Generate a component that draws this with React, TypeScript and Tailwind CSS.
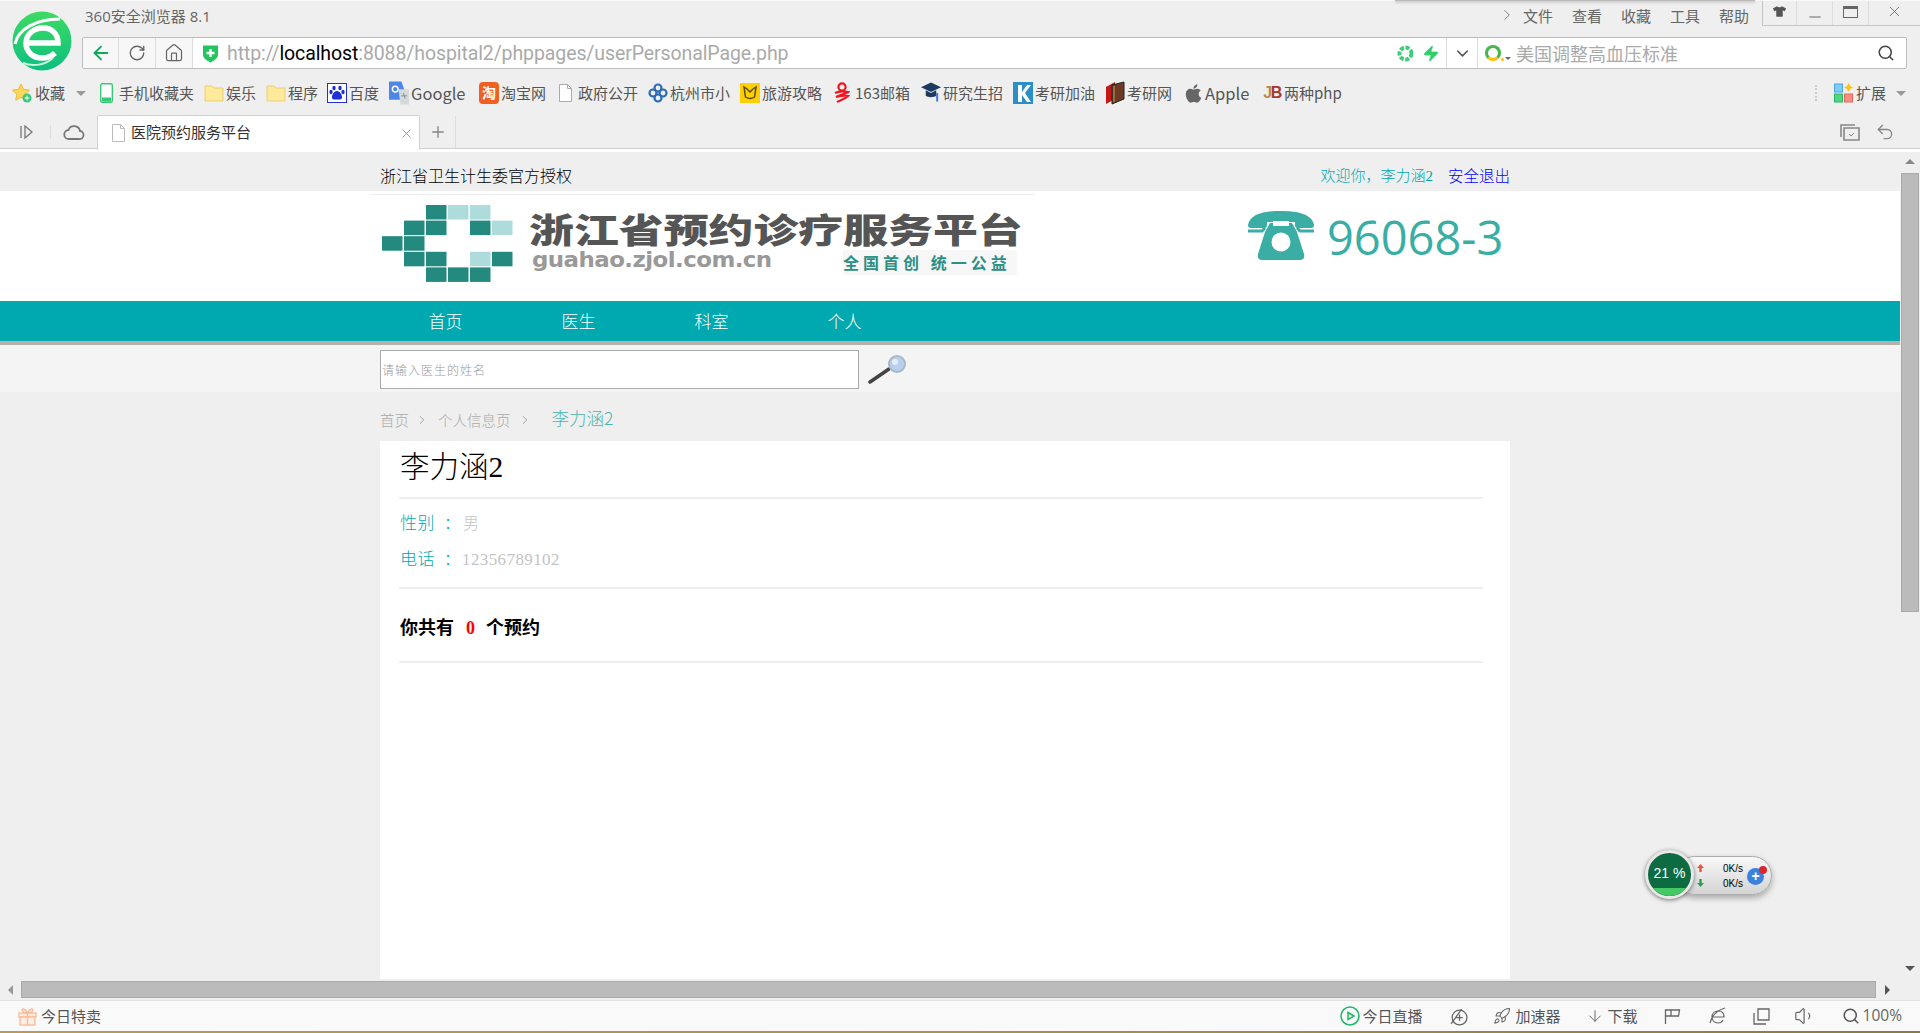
import React from "react";
import { ArrowLeft, RotateCw, Home, ChevronDown, ChevronRight, Search, X, Plus, Minus, Zap, Undo2, ArrowDown, Rocket, Volume1 } from "lucide-react";
import { FaApple, FaTshirt } from "react-icons/fa";

const Caret = () => <span className="w-0 h-0 border-x-[5px] border-x-transparent border-t-[5px] border-t-[#999]" />;

const Folder = () => (
  <svg width="20" height="20" viewBox="0 0 20 20"><path d="M1 3h7l2 2h9v13H1z" fill="#ffe99a" stroke="#e8cf78" /></svg>
);
const Doc = ({ c = "#aaa" }: { c?: string }) => (
  <svg width="15" height="18" viewBox="0 0 15 18" fill="#fff" stroke={c}><path d="M1.500.5h8l4 4v13h-12z" /><path d="M9.500.5v4h4" fill="none" /></svg>
);
const Star = () => (
  <svg width="20" height="20" viewBox="0 0 20 20"><path d="M9 1l2.600 5.400 5.900.8-4.300 4.100 1 5.900L9 14.400l-5.200 2.800 1-5.900L.5 7.200l5.900-.8z" fill="#ffd75a" stroke="#e9b93c" /><circle cx="15" cy="15" r="4.500" fill="#36c878" /><path d="M15 12.500v5M12.500 15h5" stroke="#fff" /></svg>
);
const Phone = () => (
  <svg width="13" height="20" viewBox="0 0 13 20"><rect x=".7" y=".7" width="11.600" height="18.600" rx="1.500" fill="#fff" stroke="#39c77a" strokeWidth="1.400" /><rect x="2" y="14.500" width="9" height="4" fill="#39c77a" /></svg>
);
const Baidu = () => (
  <svg width="20" height="20" viewBox="0 0 20 20"><rect x=".5" y=".5" width="19" height="19" fill="#fff" stroke="#2030d8" /><g fill="#2030d8"><ellipse cx="7" cy="5" rx="1.700" ry="2.300" /><ellipse cx="13" cy="5" rx="1.700" ry="2.300" /><ellipse cx="4" cy="9" rx="1.700" ry="2.200" /><ellipse cx="16" cy="9" rx="1.700" ry="2.200" /><path d="M10 8c3 0 5.500 4.500 5 7-.5 2-3 1.500-5 1.500S5.500 17 5 15c-.5-2.500 2-7 5-7z" /></g></svg>
);
const Gg = () => (
  <svg width="21" height="24" viewBox="0 0 21 24"><path d="M0 0h13l3 8v11H0z" fill="#4d86e8" /><path d="M10 8h11v16H12z" fill="#d6d8da" /><circle cx="6.500" cy="8" r="3" fill="none" stroke="#fff" strokeWidth="1.500" /><path d="M15 12l2 6M13 15h6" stroke="#7a8ea8" /></svg>
);
const Taobao = () => (
  <span className="w-[20px] h-[22px] rounded-[4px] bg-[#f06020] text-white text-[14px] leading-[21px] text-center font-bold">淘</span>
);
const Hz = () => (
  <svg width="20" height="20" viewBox="0 0 20 20" fill="none" stroke="#2d6cb5" strokeWidth="2.200"><circle cx="10" cy="5" r="3.500" /><circle cx="10" cy="15" r="3.500" /><circle cx="5" cy="10" r="3.500" /><circle cx="15" cy="10" r="3.500" /></svg>
);
const Lv = () => (
  <svg width="20" height="20" viewBox="0 0 20 20"><rect width="20" height="20" fill="#ffcf00" /><path d="M4 4l1.500 10c3 2 6 2 9 0L16 4l-3 2-3 3-3-3z" fill="none" stroke="#5a4a10" strokeWidth="1.500" /></svg>
);
const M163 = () => (
  <svg width="17" height="22" viewBox="0 0 17 22" fill="none" stroke="#ef1620" strokeWidth="2.200"><circle cx="9" cy="5" r="3.600" /><path d="M2 11c4-2 9-2 13-1-3 2-8 3-12 5 4-1 8-2 12-1-3 3-7 4-11 6" /></svg>
);
const Cap = () => (
  <svg width="21" height="24" viewBox="0 0 21 24"><path d="M0 6L10.500 1 21 6l-10.500 5z" fill="#1d3a5f" /><path d="M5 9v6c3 2 8 2 11 0V9l-5.500 3z" fill="#1d3a5f" /><path d="M17 12v9" stroke="#3a72e0" strokeWidth="2" /></svg>
);
const K = () => (
  <svg width="20" height="22" viewBox="0 0 20 22"><rect width="20" height="22" fill="#2a8ec7" /><path d="M5 3h4v7l5-7h4l-6 8 6 9h-4l-5-7v7H5z" fill="#fff" /></svg>
);
const Book = () => (
  <svg width="20" height="24" viewBox="0 0 20 24"><path d="M1 6l9-5v17l-9 5z" fill="#c21818" /><path d="M7 4l12-3v17L7 23z" fill="#6a3a25" stroke="#222" /><path d="M9 5v16" stroke="#c9a060" /></svg>
);
const JB = () => (
  <span className="w-[20px] h-[22px] flex items-center justify-center text-[16px] font-black font-['Liberation_Sans',sans-serif] tracking-[-1.500px]"><span className="text-[#b58a56]">J</span><span className="text-[#a63a30]">B</span></span>
);

const bookmarks: { icon: React.ReactNode; label: string; w: number; iw?: number; big?: boolean }[] = [
  { icon: <Phone />, label: "手机收藏夹", w: 104, iw: 17 },
  { icon: <Folder />, label: "娱乐", w: 62 },
  { icon: <Folder />, label: "程序", w: 61 },
  { icon: <Baidu />, label: "百度", w: 62 },
  { icon: <Gg />, label: "Google", w: 90, big: true },
  { icon: <Taobao />, label: "淘宝网", w: 79 },
  { icon: <Doc />, label: "政府公开", w: 90, iw: 18 },
  { icon: <Hz />, label: "杭州市小", w: 92 },
  { icon: <Lv />, label: "旅游攻略", w: 93 },
  { icon: <M163 />, label: "163邮箱", w: 88 },
  { icon: <Cap />, label: "研究生招", w: 92 },
  { icon: <K />, label: "考研加油", w: 92 },
  { icon: <Book />, label: "考研网", w: 79 },
  { icon: <FaApple className="text-[#666] text-[21px]" />, label: "Apple", w: 78, iw: 19, big: true },
  { icon: <JB />, label: "两种php", w: 84 },
];

const Logo = () => (
  <svg width="60" height="60" viewBox="0 0 60 60">
    <defs>
      <linearGradient id="lg" x1="0" y1="0" x2="0" y2="1"><stop offset="0" stopColor="#3edb63" /><stop offset="1" stopColor="#0bbf80" /></linearGradient>
    </defs>
    <circle cx="30" cy="30" r="29.500" fill="url(#lg)" />
    <path d="M14 32h32c0-10-7-15-15-15-10 0-17 7-17 15 0 9 7 15 16 15 6 0 10-2 13-5" fill="none" stroke="#fff" strokeWidth="5.500" />
    <path d="M3 33C6 18 24 8 48 8" fill="none" stroke="#fff" strokeWidth="3" />
    <path d="M11 52c10 4 22 2 30-5" fill="none" stroke="#c8f5d8" strokeWidth="2" />
  </svg>
);

const mosaic = [
  [2, 0, "d"], [3, 0, "l"], [4, 0, "l"],
  [1, 1, "d"], [2, 1, "d"], [4, 1, "d"], [5, 1, "l"],
  [0, 2, "d"], [1, 2, "d"],
  [1, 3, "d"], [2, 3, "d"], [4, 3, "l"], [5, 3, "d"],
  [2, 4, "d"], [3, 4, "d"], [4, 4, "d"],
] as [number, number, string][];

const Mosaic = () => (
  <svg width="131" height="77" viewBox="0 0 131 77" className="shrink-0">
    {mosaic.map(([c, r, t], i) => (
      <rect key={i} x={c * 22} y={r * 15.600} width="20.500" height="14.500" fill={t === "d" ? "#24897e" : "#aedbdc"} />
    ))}
  </svg>
);

const Tel = () => (
  <svg width="66" height="50" viewBox="0 0 66 50" className="shrink-0">
    <path d="M0 14C2 3 16 0 33 0s31 3 33 14c0 2-1 3-3 3H49c-1 0-2-1-2-3v-3H19v3c0 2-1 3-2 3H3c-2 0-3-1-3-3z" fill="#3aaea5" />
    <path d="M0 20h14l3-3M66 20H52l-3-3" fill="none" stroke="#3aaea5" strokeWidth="3" />
    <path d="M22 12h22l5 9 7 22c1 4-1 6-4 6H14c-3 0-5-2-4-6l7-22z" fill="#3aaea5" />
    <rect x="25" y="10" width="16" height="5" fill="#fff" />
    <circle cx="33" cy="31" r="9.500" fill="#fff" />
  </svg>
);

const Magnifier = () => (
  <svg width="40" height="30" viewBox="0 0 40 30" className="shrink-0">
    <path d="M2 27L21 14" stroke="#444" strokeWidth="3.500" strokeLinecap="round" />
    <circle cx="29" cy="9" r="8" fill="#b8d0f0" stroke="#a8b8c8" strokeWidth="2" />
    <circle cx="27" cy="7" r="3" fill="#e4eefa" />
  </svg>
);

const Widget = () => (
  <div className="absolute left-[1645px] top-[850px] w-[127px] h-[49px] font-['Liberation_Sans',sans-serif]">
    <div className="absolute left-[30px] top-[6px] w-[97px] h-[39px] rounded-full bg-gradient-to-b from-[#f8f8f8] to-[#d4d4d4] border border-[#aaa] shadow-[0_3px_6px_rgba(0,0,0,0.3)]">
      <svg width="7" height="8" viewBox="0 0 7 8" className="absolute left-[21px] top-[7px]"><path d="M3.500 0L7 4H4.700v4H2.300V4H0z" fill="#e8553c" /></svg>
      <svg width="7" height="8" viewBox="0 0 7 8" className="absolute left-[21px] top-[22px]"><path d="M3.500 8L7 4H4.700V0H2.300v4H0z" fill="#2f9a55" /></svg>
      <span className="absolute left-[47px] top-[6px] text-[10px] leading-[12px] text-black">0K/s</span>
      <span className="absolute left-[47px] top-[21px] text-[10px] leading-[12px] text-black">0K/s</span>
      <span className="absolute left-[71px] top-[11px] w-[17px] h-[17px] rounded-full bg-[#3b82dc] text-white text-[14px] leading-[16px] text-center font-bold">+</span>
      <span className="absolute left-[83px] top-[9px] w-[8px] h-[8px] rounded-full bg-[#d9272e]" />
    </div>
    <div className="absolute left-0 top-0 w-[49px] h-[49px] rounded-full border-[3px] border-[#e8e8e8] shadow-[0_1px_4px_rgba(0,0,0,0.5)] overflow-hidden bg-[#0d6b42] flex flex-col">
      <div className="flex-1 pt-[5px] flex items-center justify-center text-white text-[14px]">21 %</div>
      <div className="h-[8px] bg-[#45c964]" />
    </div>
  </div>
);

const Sep = () => <span className="block w-px h-[32px] bg-[#dcdcdc]" />;

export default function App() {
  return (
    <div className="relative w-[1920px] h-[1033px] overflow-hidden bg-[#efefef] flex flex-col font-['Noto_Sans_CJK_SC',sans-serif] text-[#555]">
      {/* top rows */}
      <div className="flex border-t border-t-[#fafafa] h-[69px]">
        <div className="w-[82px] shrink-0 pl-[12px] pt-[10px]"><Logo /></div>
        <div className="flex-1 flex flex-col">
          <div className="h-[36px] flex items-start">
            <span className="ml-[3px] mt-[5px] text-[15px] leading-[20px] text-[#666] font-['Open_Sans','Noto_Sans_CJK_SC',sans-serif]">360安全浏览器 8.1</span>
            <div className="ml-auto flex items-start">
              <ChevronRight className="w-[18px] h-[18px] mt-[5px] mr-[7px] text-[#777]" strokeWidth={1.200} />
              <div className="flex gap-[19px] mt-[5px] mr-[13px] text-[15px] leading-[20px] text-[#666]">
                <span>文件</span><span>查看</span><span>收藏</span><span>工具</span><span>帮助</span>
              </div>
              <div className="flex h-[25px] border-l border-b border-[#c4c4c4] text-[#666]">
                <div className="w-[34px] flex justify-center items-center border-r border-[#ddd]"><FaTshirt className="text-[#555] text-[13px] -mt-[3px]" /></div>
                <div className="w-[36px] flex justify-center items-center border-r border-[#ddd]"><Minus className="w-[18px] h-[18px] mt-[7px]" strokeWidth={1.300} /></div>
                <div className="w-[36px] flex justify-center items-center border-r border-[#ddd]"><span className="w-[15px] h-[12px] border border-t-[3px] border-[#666] -mt-[3px]" /></div>
                <div className="w-[51px] flex justify-center items-center"><X className="w-[17px] h-[17px] -mt-[4px]" strokeWidth={1.200} /></div>
              </div>
            </div>
          </div>
          <div className="h-[32px] mr-[13px] flex items-stretch bg-white border border-[#bdbdbd] rounded-[2px]">
            <div className="w-[36px] flex items-center justify-center bg-[#f7f7f7] border-r border-[#ddd]"><ArrowLeft className="w-[22px] h-[22px] text-[#0da858]" strokeWidth={2} /></div>
            <div className="w-[37px] flex items-center justify-center bg-[#f7f7f7] border-r border-[#ddd]"><RotateCw className="w-[18px] h-[18px] text-[#666]" strokeWidth={1.800} /></div>
            <div className="w-[37px] flex items-center justify-center bg-[#f7f7f7] border-r border-[#ddd]"><Home className="w-[20px] h-[20px] text-[#666]" strokeWidth={1.500} /></div>
            <div className="w-[34px] flex items-center justify-center">
              <svg width="17" height="19" viewBox="0 0 17 19"><path d="M1 1.500h15v9c0 4-4 6-7.500 8C5 16.500 1 14.500 1 10.500z" fill="#22c55e" /><path d="M8.500 5v8M4.500 9h8" stroke="#fff" strokeWidth="2.500" /></svg>
            </div>
            <div className="flex-1 flex items-center pt-[2px] text-[19.500px] text-[#aaa] font-['Roboto',sans-serif] tracking-[-0.1px] whitespace-nowrap">http://<span className="text-black">localhost</span>:8088/hospital2/phppages/userPersonalPage.php</div>
            <div className="w-[68px] flex items-center justify-center gap-[8px] pl-[12px]">
              <svg width="17" height="17" viewBox="0 0 17 17" fill="none" stroke="#3ecf7a" strokeWidth="4" strokeDasharray="4 1.500"><circle cx="8.500" cy="8.500" r="6" /></svg>
              <Zap className="w-[18px] h-[21px] text-[#2fcf6a] fill-[#2fcf6a]" strokeWidth={1} />
            </div>
            <div className="w-[32px] flex items-center justify-center border-x border-[#ddd]"><ChevronDown className="w-[19px] h-[19px] text-[#555]" strokeWidth={1.800} /></div>
            <div className="w-[428px] flex items-center pl-[7px] relative">
              <span className="w-[16px] h-[16px] rounded-full border-[3px] border-[#45b649] border-b-[#ffc107]" />
              <span className="w-[3px] h-[3px] rounded-full bg-[#ffc107] mt-[12px]" />
              <span className="ml-[1px] mt-[10px] w-0 h-0 border-x-[3px] border-x-transparent border-t-[3px] border-t-[#666]" />
              <span className="ml-[5px] text-[18px] text-[#aaa] whitespace-nowrap">美国调整高血压标准</span>
              <Search className="absolute right-[11px] top-[6px] w-[18px] h-[18px] text-[#444]" strokeWidth={2} />
            </div>
          </div>
        </div>
      </div>
      <div className="absolute left-[1395px] top-0 w-[360px] h-[1px] bg-[#bbb] shadow-[0_1px_3px_rgba(0,0,0,0.4)]" />

      {/* bookmarks */}
      <div className="h-[46px] pt-[2px] flex items-center pl-[12px] text-[15px] text-[#555] whitespace-nowrap">
        <Star />
        <span className="ml-[3px]">收藏</span>
        <span className="ml-[11px] mr-[14px] flex"><Caret /></span>
        {bookmarks.map((b) => (
          <div key={b.label} style={{ width: b.w }} className="shrink-0 flex items-center gap-[2px]">
            <span style={{ width: b.iw ?? 20 }} className="flex items-center shrink-0">{b.icon}</span>
            <span className={b.big ? "text-[16.500px]" : ""}>{b.label}</span>
          </div>
        ))}
        <div className="ml-auto flex items-center pr-[14px]">
          <span className="w-[2px] h-[16px] border-l-2 border-dotted border-[#ccc] mr-[17px]" />
          <svg width="20" height="20" viewBox="0 0 20 20"><rect x=".5" y="1" width="8" height="8" fill="#7ccdf8" stroke="#4ea6e0" /><rect x=".5" y="11" width="8" height="8" fill="#4fd884" stroke="#2fb860" /><rect x="10.500" y="11" width="8" height="8" fill="#f98d80" stroke="#e06a60" /><path d="M14.500 0l1.500 3 3 1.500-3 1.500-1.500 3-1.500-3-3-1.500 3-1.500z" fill="#f9c218" /></svg>
          <span className="ml-[2px] mr-[10px]">扩展</span>
          <Caret />
        </div>
      </div>

      {/* tab row */}
      <div className="h-[34px] flex items-center border-b border-[#d2d2d2] relative">
        <svg width="14" height="14" viewBox="0 0 14 14" className="ml-[20px]" fill="none" stroke="#777" strokeWidth="1.300"><path d="M1 1v12M5 1l7 6-7 6z" /></svg>
        <span className="ml-[16px] w-px h-[14px] bg-[#ddd]" />
        <svg width="22" height="18" viewBox="0 0 22 18" className="ml-[12px]" fill="none" stroke="#777" strokeWidth="1.800"><path d="M6 16a4.500 4.500 0 0 1-.5-9 6 6 0 0 1 11.500 1 4 4 0 0 1-1 8z" /></svg>
        <div className="ml-[12px] w-[323px] h-[35px] self-start flex items-center bg-white border border-b-0 border-[#d2d2d2] rounded-t-[2px] relative z-10">
          <span className="ml-[13px] flex"><Doc c="#bbb" /></span>
          <span className="ml-[5px] -mt-[1px] text-[15px] text-[#333]">医院预约服务平台</span>
          <X className="ml-auto mr-[5px] w-[15px] h-[15px] text-[#888]" strokeWidth={1.300} />
        </div>
        <Plus className="ml-[9px] w-[18px] h-[18px] text-[#888]" strokeWidth={1.800} />
        <span className="ml-[8px]"><Sep /></span>
        <div className="ml-auto flex items-center gap-[15px] pr-[25px] text-[#888]">
          <svg width="20" height="18" viewBox="0 0 20 18" fill="none" stroke="#888" strokeWidth="1.600"><path d="M1 14V2h14M4 17V5h15v12z" /><path d="M9 11l2 2 3-3" strokeWidth="1" /></svg>
          <Undo2 className="w-[20px] h-[20px]" strokeWidth={1.600} />
        </div>
      </div>
      <div className="h-[3px] bg-white" />

      {/* page + vertical scrollbar */}
      <div className="flex-1 min-h-0 flex">
        <div className="flex-1 min-w-0 flex flex-col font-['Liberation_Serif','Noto_Sans_CJK_SC',serif] font-light overflow-hidden">
          {/* top strip */}
          <div className="h-[39px] shrink-0 flex items-center pt-[10px] pl-[380px] pr-[390px] text-[16px] text-black">
            <span>浙江省卫生计生委官方授权</span>
            <span className="ml-auto text-[15px] text-[#00a8b0]">欢迎你，李力涵2</span>
            <span className="ml-[15px] text-[15.500px] text-[#0000ff]">安全退出</span>
          </div>
          {/* header */}
          <div className="h-[110px] shrink-0 bg-white pl-[382px] relative font-['Noto_Sans_CJK_SC',sans-serif]">
            <div className="absolute left-[370px] top-[3px] w-[665px] h-px bg-[#eee]" />
            <div className="flex items-start pt-[14px]">
              <Mosaic />
              <div className="ml-[16px] w-[495px] shrink-0 pt-[7px]">
                <div className="h-[34px] text-[34px] leading-[34px] font-black text-[#555] whitespace-nowrap origin-left scale-x-[1.32]">浙江省预约诊疗服务平台</div>
                <div className="flex items-start mt-[2px]">
                  <span className="ml-[3px] w-[311px] text-[21px] leading-[24px] font-bold text-[#999] font-['DejaVu_Sans',sans-serif] -tracking-[0.5px] origin-left scale-x-[1.09] whitespace-nowrap">guahao.zjol.com.cn</span>
                  <span className="mt-[2px] w-[174px] h-[25px] bg-[#f7f7f7] text-[#2e8f84] text-[16px] leading-[25px] font-bold text-left whitespace-nowrap tracking-[4px]">全国首创 统一公益</span>
                </div>
              </div>
              <div className="ml-[224px] flex items-start mt-[6px]">
                <Tel />
                <span className="ml-[13px] mt-[2px] text-[47px] leading-[48px] text-[#3aaea5] font-['Open_Sans',sans-serif] font-normal">96068-3</span>
              </div>
            </div>
          </div>
          {/* nav */}
          <div className="h-[44px] shrink-0 bg-[#00a8b0] border-b-[4px] border-[#b5b2ad] pl-[379px] flex items-center font-['Noto_Sans_CJK_SC',sans-serif] text-[17px] text-white">
            <span className="w-[133px] text-center">首页</span>
            <span className="w-[133px] text-center">医生</span>
            <span className="w-[133px] text-center">科室</span>
            <span className="w-[133px] text-center">个人</span>
          </div>
          {/* search */}
          <div className="h-[47px] shrink-0 bg-[#f4f4f4] pl-[380px] pt-[5px] flex items-start">
            <div className="w-[479px] h-[39px] bg-white border border-[#aaa] flex items-center pl-[1px] text-[12px] text-[#999] font-['Noto_Sans_CJK_SC',sans-serif] tracking-[1px]">请输入医生的姓名</div>
            <span className="ml-[9px] mt-[5px] flex"><Magnifier /></span>
          </div>
          {/* breadcrumb */}
          <div className="h-[49px] shrink-0 pl-[380px] pt-[4px] flex items-center text-[14.500px] text-[#aaa] font-['Noto_Sans_CJK_SC',sans-serif] font-light">
            <span className="mt-[3px]">首页</span>
            <ChevronRight className="ml-[6px] w-[14px] h-[14px] mt-[3px] text-[#888]" strokeWidth={1.300} />
            <span className="ml-[9px] mt-[3px]">个人信息页</span>
            <ChevronRight className="ml-[7px] w-[14px] h-[14px] mt-[3px] text-[#888]" strokeWidth={1.300} />
            <span className="ml-[20px] text-[17.500px] text-[#4db6ac]">李力涵2</span>
          </div>
          {/* card */}
          <div className="ml-[380px] w-[1130px] flex-1 bg-white pl-[19px] pr-[27px] text-[16px]">
            <div className="h-[58px] pb-[3px] border-b-2 border-[#eee] pl-[1px] flex items-center text-[29.500px] text-black">李力涵2</div>
            <div className="h-[90px] border-b-2 border-[#eee] pl-[1px] pt-[7px]">
              <div className="h-[35px] flex items-center">
                <span className="text-[17px] text-[#00a8b0] tracking-[0.5px]">性别</span>
                <span className="ml-[9px] w-[19px] text-[#00a8b0]">：</span>
                <span className="text-[#c4c4c4]">男</span>
              </div>
              <div className="h-[35px] pt-[2px] flex items-center">
                <span className="text-[17px] text-[#00a8b0] tracking-[0.5px]">电话</span>
                <span className="ml-[9px] w-[18px] text-[#00a8b0]">：</span>
                <span className="text-[17px] text-[#c4c4c4] tracking-[0.4px]">12356789102</span>
              </div>
            </div>
            <div className="h-[74px] border-b-2 border-[#eee] pl-[1px] pt-[7px] flex items-center text-[18px] font-bold text-black">
              <span>你共有</span>
              <span className="ml-[12px] text-[#ff0000]">0</span>
              <span className="ml-[11px]">个预约</span>
            </div>
          </div>
        </div>
        {/* vertical scrollbar */}
        <div className="w-[20px] shrink-0 flex flex-col items-center">
          <span className="mt-[7px] w-0 h-0 border-x-[5px] border-x-transparent border-b-[5px] border-b-[#888]" />
          <div className="mt-[9px] w-[18px] h-[439px] bg-[#bbb] border border-[#aaa]" />
          <span className="mt-auto mb-[8px] w-0 h-0 border-x-[5px] border-x-transparent border-t-[5px] border-t-[#555]" />
        </div>
      </div>

      {/* horizontal scrollbar */}
      <div className="h-[21px] shrink-0 flex items-center">
        <span className="ml-[8px] w-0 h-0 border-y-[5px] border-y-transparent border-r-[5px] border-r-[#999]" />
        <div className="ml-[8px] w-[1855px] h-[17px] bg-[#bbb] border border-[#aaa]" />
        <span className="ml-[9px] w-0 h-0 border-y-[5px] border-y-transparent border-l-[5px] border-l-[#555]" />
      </div>

      {/* status bar */}
      <div className="h-[31px] shrink-0 bg-[#f9f9f9] border-t border-[#e2e2e2] flex items-center text-[15px] text-[#555] whitespace-nowrap">
        <svg width="19" height="19" viewBox="0 0 19 19" className="ml-[18px]" fill="#fdeee4" stroke="#fbb894" strokeWidth="1.300"><rect x="1" y="6" width="17" height="4" /><rect x="2" y="10" width="15" height="8" /><path d="M9.500 6v12M9.500 6C7 1 3 1 4.500 4c.5 1 3 2 5 2zM9.500 6C12 1 16 1 14.500 4c-.5 1-3 2-5 2z" fill="none" /></svg>
        <span className="ml-[4px]">今日特卖</span>
        <div className="ml-auto flex items-center pr-[18px]">
          <svg width="20" height="20" viewBox="0 0 20 20" fill="none" stroke="#1cb868" strokeWidth="1.500"><circle cx="10" cy="10" r="9" /><path d="M8 6.500l6 3.500-6 3.500z" /></svg>
          <span className="ml-[3px]">今日直播</span>
          <svg width="19" height="19" viewBox="0 0 18 18" className="ml-[26px]" fill="none" stroke="#666" strokeWidth="1.200"><circle cx="10" cy="10" r="7" /><path d="M7 10h6M10 7v6M2 16L12 2" /></svg>
          <Rocket className="ml-[25px] w-[18px] h-[18px] text-[#666]" strokeWidth={1.400} />
          <span className="ml-[5px]">加速器</span>
          <ArrowDown className="ml-[25px] w-[18px] h-[20px] text-[#666]" strokeWidth={1.300} />
          <span className="ml-[4px]">下载</span>
          <svg width="17" height="16" viewBox="0 0 17 16" className="ml-[26px]" fill="none" stroke="#666" strokeWidth="1.300"><path d="M1.500 16V2h14l-1 6H7V2M7 8H1.500" /></svg>
          <svg width="18" height="18" viewBox="0 0 18 18" className="ml-[28px]" fill="none" stroke="#666" strokeWidth="1.200"><path d="M3 10h12c0-4-2-6-6-6s-6 3-6 6 2 6 6 6c3 0 4-1 5-3M1 16C3 8 9 3 16 1" /></svg>
          <svg width="17" height="17" viewBox="0 0 17 17" className="ml-[26px]" fill="none" stroke="#666" strokeWidth="1.300"><path d="M5 1h11v11H5zM1 5v11h12" /></svg>
          <Volume1 className="ml-[24px] w-[22px] h-[22px] text-[#666]" strokeWidth={1.300} />
          <Search className="ml-[26px] w-[18px] h-[18px] text-[#555]" strokeWidth={2} />
          <span className="ml-[3px] text-[#666] font-['Open_Sans',sans-serif] text-[15.500px]">100%</span>
        </div>
      </div>
      <div className="h-[2px] shrink-0 bg-gradient-to-r from-[#b99a5a] via-[#a9924f] to-[#8a7a45]" />

      <Widget />
    </div>
  );
}
